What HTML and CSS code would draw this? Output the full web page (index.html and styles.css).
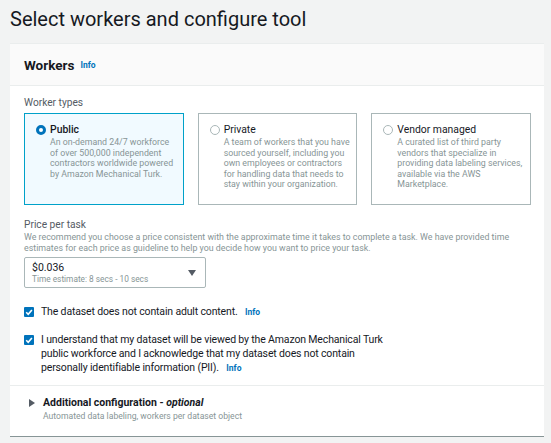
FILE: index.html
```html
<!DOCTYPE html>
<html>
<head>
<meta charset="utf-8">
<link rel="stylesheet" href="styles.css">
</head>
<body>
<div class="page">
  <h1 class="title">Select workers and configure tool</h1>
  <div class="panel">
    <div class="panel-header">
      <span class="panel-title">Workers</span><a class="info">Info</a>
    </div>
    <div class="panel-body">
      <div class="label">Worker types</div>
      <div class="cards">
        <div class="card selected">
          <span class="radio on"></span>
          <div class="card-text">
            <div class="card-title">Public</div>
            <div class="card-desc">An on-demand 24/7 workforce<br>of over 500,000 independent<br>contractors worldwide powered<br>by Amazon Mechanical Turk.</div>
          </div>
        </div>
        <div class="card">
          <span class="radio"></span>
          <div class="card-text">
            <div class="card-title">Private</div>
            <div class="card-desc">A team of workers that you have<br>sourced yourself, including you<br>own employees or contractors<br>for handling data that needs to<br>stay within your organization.</div>
          </div>
        </div>
        <div class="card">
          <span class="radio"></span>
          <div class="card-text">
            <div class="card-title">Vendor managed</div>
            <div class="card-desc">A curated list of third party<br>vendors that specialize in<br>providing data labeling services,<br>available via the AWS<br>Marketplace.</div>
          </div>
        </div>
      </div>

      <div class="label price-label">Price per task</div>
      <div class="hint">We recommend you choose a price consistent with the approximate time it takes to complete a task. We have provided time<br>estimates for each price as guideline to help you decide how you want to price your task.</div>
      <div class="select">
        <div class="select-text">
          <div class="select-value">$0.036</div>
          <div class="select-sub">Time estimate: 8 secs - 10 secs</div>
        </div>
        <span class="caret"></span>
      </div>

      <div class="check-row first">
        <span class="checkbox"><svg viewBox="0 0 10 10" width="10" height="10"><path d="M2.2 5.2 L4.2 7.2 L7.9 2.9" fill="none" stroke="#fff" stroke-width="1.6"/></svg></span>
        <div class="check-text">The dataset does not contain adult content. <a class="info">Info</a></div>
      </div>
      <div class="check-row">
        <span class="checkbox"><svg viewBox="0 0 10 10" width="10" height="10"><path d="M2.2 5.2 L4.2 7.2 L7.9 2.9" fill="none" stroke="#fff" stroke-width="1.6"/></svg></span>
        <div class="check-text">I understand that my dataset will be viewed by the Amazon Mechanical Turk<br>public workforce and I acknowledge that my dataset does not contain<br>personally identifiable information (PII). <a class="info">Info</a></div>
      </div>
    </div>
    <div class="panel-footer">
      <div class="expander">
        <span class="tri"></span>
        <div>
          <div class="exp-title">Additional configuration - <em>optional</em></div>
          <div class="exp-sub">Automated data labeling, workers per dataset object</div>
        </div>
      </div>
    </div>
  </div>
</div>
</body>
</html>
```

FILE: styles.css
```css
html, body {
  margin: 0;
  padding: 0;
  background: #f2f3f3;
  font-family: Roboto, "Liberation Sans", sans-serif;
  color: #16191f;
}
.page {
  padding: 6px 7px 0 10px;
}
.title {
  margin: 0;
  font-size: 20px;
  font-weight: 400;
  line-height: 26px;
  color: #16191f;
}
.panel {
  margin-top: 11px;
  background: #fff;
  border-top: 1px solid #eaeded;
  border-bottom: 1px solid #879596;
}
.panel-header {
  height: 41px;
  background: #fafafa;
  border-bottom: 1px solid #eaeded;
  display: flex;
  align-items: center;
  padding: 0 14px;
}
.panel-title {
  font-size: 13.5px;
  font-weight: 700;
}
.info {
  color: #0073bb;
  font-size: 8.5px;
  font-weight: 700;
  margin-left: 6px;
}
.panel-body {
  padding: 10px 13px 10px 14px;
  border-bottom: 1px solid #eaeded;
}
.label {
  font-size: 10.2px;
  line-height: 14px;
  color: #545b64;
}
.cards {
  margin-top: 3px;
  display: grid;
  grid-template-columns: repeat(3, 1fr);
  gap: 14px;
}
.card {
  height: 92px;
  box-sizing: border-box;
  border: 1px solid #aab7b8;
  padding: 10px 6px 0 11px;
  display: flex;
  gap: 4px;
  white-space: nowrap;
}
.card.selected {
  border-color: #00a1c9;
  background: #f1faff;
}
.radio {
  flex: none;
  width: 10px;
  height: 10px;
  box-sizing: border-box;
  border: 1px solid #aab7b8;
  border-radius: 50%;
  background: #fff;
  margin-top: 1px;
}
.radio.on {
  border: 3px solid #0073bb;
}
.card-title {
  font-size: 10.4px;
  line-height: 12px;
  font-weight: 400;
}
.card.selected .card-title {
  font-weight: 500;
}
.card-desc {
  font-size: 8.8px;
  line-height: 10.6px;
  color: #879596;
  margin-top: 1px;
}
.price-label {
  margin-top: 13px;
}
.hint {
  font-size: 8.85px;
  line-height: 10.5px;
  color: #879596;
  white-space: nowrap;
}
.select {
  margin-top: 4px;
  width: 182px;
  height: 31px;
  box-sizing: border-box;
  border: 1px solid #aab7b8;
  border-radius: 2px;
  display: flex;
  align-items: center;
  justify-content: space-between;
  padding: 0 9px 0 7px;
}
.select-value {
  font-size: 10.5px;
  line-height: 13px;
}
.select-sub {
  font-size: 8.3px;
  line-height: 11px;
  color: #879596;
}
.caret {
  width: 0;
  height: 0;
  border-left: 4px solid transparent;
  border-right: 4px solid transparent;
  border-top: 6px solid #545b64;
  margin-top: 1px;
}
.check-row {
  display: flex;
  gap: 7px;
  margin-top: 14px;
}
.check-row.first {
  margin-top: 17px;
}
.checkbox {
  flex: none;
  width: 10px;
  height: 10px;
  background: #0073bb;
  border-radius: 1px;
  margin-top: 2px;
  display: flex;
}
.check-text {
  font-size: 10.5px;
  letter-spacing: -0.15px;
  line-height: 14px;
  white-space: nowrap;
}
.check-text .info {
  margin-left: 5px;
  letter-spacing: 0;
}
.panel-footer {
  padding: 9px 14px 14px 19px;
}
.expander {
  display: flex;
  gap: 8px;
}
.tri {
  flex: none;
  width: 0;
  height: 0;
  border-top: 4px solid transparent;
  border-bottom: 4px solid transparent;
  border-left: 6px solid #545b64;
  margin-top: 4px;
}
.exp-title {
  font-size: 10.5px;
  line-height: 15px;
  font-weight: 700;
}
.exp-title em {
  font-style: italic;
}
.exp-sub {
  font-size: 8.6px;
  line-height: 12px;
  color: #879596;
}
```
